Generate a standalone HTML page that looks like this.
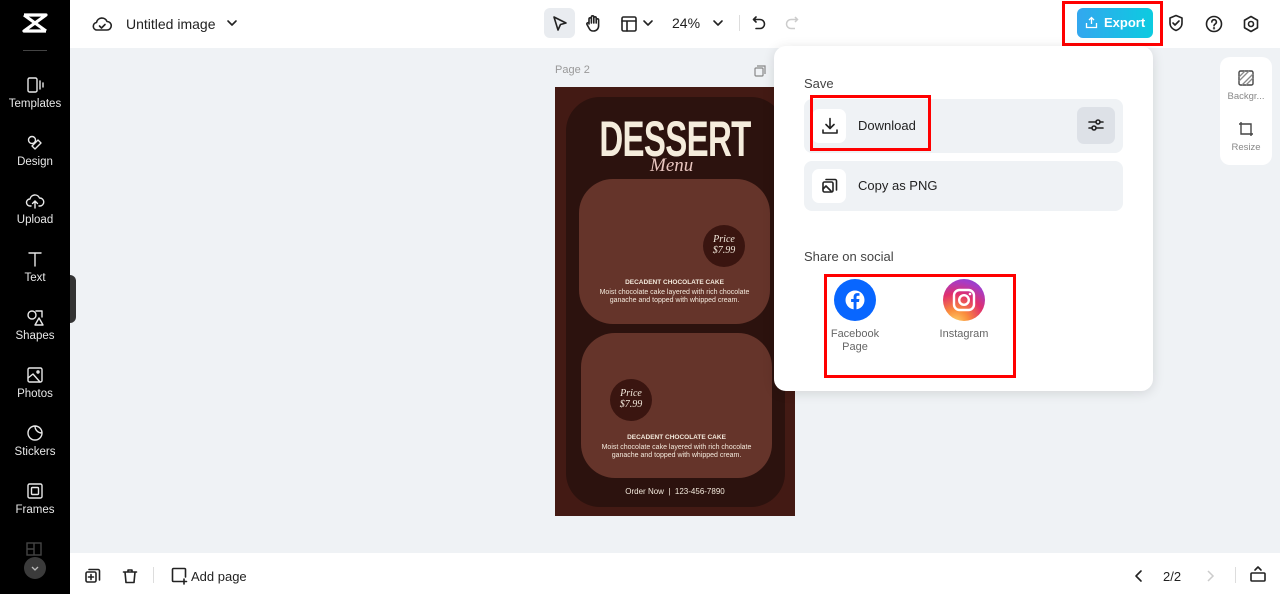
<!DOCTYPE html>
<html><head><meta charset="utf-8"><style>
*{box-sizing:border-box;margin:0;padding:0}
body{width:1280px;height:594px;overflow:hidden;background:#eff2f5;font-family:"Liberation Sans",sans-serif;position:relative;color:#222}
.abs{position:absolute}
#side{left:0;top:0;width:70px;height:594px;background:#000}
.si{position:absolute;left:0;width:70px;text-align:center;color:#e8e8e8;font-size:11.5px}
.si svg{display:block;margin:0 auto 4px}
#top{left:70px;top:0;width:1210px;height:48px;background:#fff}
#bot{left:70px;top:553px;width:1210px;height:41px;background:#fff}
svg{overflow:visible}
.st{fill:none;stroke:#222;stroke-width:1.6;stroke-linecap:round;stroke-linejoin:round}
.sw{fill:none;stroke:#e8e8e8;stroke-width:1.4;stroke-linecap:round;stroke-linejoin:round}
#dd{left:774px;top:46px;width:379px;height:345px;background:#fff;border-radius:12px;box-shadow:0 2px 12px rgba(0,0,0,.12)}
.row{position:absolute;left:30px;width:319px;background:#eff2f5;border-radius:8px}
.ib{position:absolute;left:8px;width:34px;height:34px;background:#fff;border-radius:7px}
.red{position:absolute;border:3px solid #f00}
.poster{left:555px;top:87px;width:240px;height:429px;background:#431a14}
.card{position:absolute;background:#65342a;border-radius:34px;color:#f3e9dc;text-align:center}
.price{position:absolute;width:42px;height:42px;border-radius:50%;background:#3a1510;color:#f3e9dc;font-family:"Liberation Serif",serif;font-style:italic;font-size:10px;line-height:11px;padding-top:9px;text-align:center}
</style></head><body>
<div id="side" class="abs">
<svg class="abs" style="left:22px;top:12px" width="26" height="22" viewBox="0 0 26 22"><path d="M2 3h22L2 19h22" fill="none" stroke="#fff" stroke-width="3.2" stroke-linejoin="round"/><path d="M2 3L24 19" stroke="#fff" stroke-width="3.2"/></svg>
<div class="abs" style="left:23px;top:50px;width:24px;height:1px;background:#444"></div>
<div class="si" style="top:76px"><svg width="18" height="18" class="sw" viewBox="0 0 18 18"><rect x="2" y="2" width="9" height="14" rx="1.5"/><path d="M14 5v8M17 7v4"/></svg>Templates</div>
<div class="si" style="top:134px"><svg width="18" height="18" class="sw" viewBox="0 0 18 18"><circle cx="6" cy="6" r="3.5"/><path d="M9 15l6-6-3-3-6 6z"/></svg>Design</div>
<div class="si" style="top:192px"><svg width="18" height="18" class="sw" viewBox="0 0 18 18"><path d="M5 14H4a3.5 3.5 0 010-7 5 5 0 019.5-1A3.5 3.5 0 0114 14h-1M9 16V9M6.5 11.5L9 9l2.5 2.5"/></svg>Upload</div>
<div class="si" style="top:250px"><svg width="18" height="18" class="sw" viewBox="0 0 18 18"><path d="M3 3h12M9 3v13"/></svg>Text</div>
<div class="si" style="top:308px"><svg width="18" height="18" class="sw" viewBox="0 0 18 18"><circle cx="6" cy="7" r="4"/><path d="M10 3h6v6M9 17l4-7 4 7z"/></svg>Shapes</div>
<div class="si" style="top:366px"><svg width="18" height="18" class="sw" viewBox="0 0 18 18"><rect x="2" y="2" width="14" height="14" rx="1.5"/><circle cx="12" cy="6" r="1"/><path d="M2 12l5-4 7 8"/></svg>Photos</div>
<div class="si" style="top:424px"><svg width="18" height="18" class="sw" viewBox="0 0 18 18"><path d="M16 9a7 7 0 11-7-7c0 4 3 7 7 7zM9 2a7 7 0 017 7"/></svg>Stickers</div>
<div class="si" style="top:482px"><svg width="18" height="18" class="sw" viewBox="0 0 18 18"><rect x="2" y="2" width="14" height="14" rx="1.5"/><rect x="5.5" y="5.5" width="7" height="7" rx="1"/></svg>Frames</div>
<svg class="abs" style="left:26px;top:542px" width="16" height="14" viewBox="0 0 16 14"><rect x="1" y="1" width="14" height="12" fill="none" stroke="#444" stroke-width="1.4"/><path d="M8 1v12M1 7h7" stroke="#444" stroke-width="1.4"/></svg>
<div class="abs" style="left:24px;top:557px;width:22px;height:22px;border-radius:50%;background:#3b3b3b"><svg width="22" height="22" viewBox="0 0 22 22"><path d="M8 10l3 3 3-3" fill="none" stroke="#bbb" stroke-width="1.3"/></svg></div>
</div>
<div class="abs" style="left:70px;top:275px;width:6px;height:48px;background:#333;border-radius:0 6px 6px 0"></div>
<div id="top" class="abs">
<svg class="abs st" style="left:22px;top:15px" width="20" height="18" viewBox="0 0 20 18"><path d="M5 15H4.5a3.8 3.8 0 010-7.5 5.5 5.5 0 0110.5-1A4 4 0 0115 15z"/><path d="M7.5 11l2 2 3.5-3.5"/></svg>
<div class="abs" style="left:56px;top:16px;font-size:14px;color:#222">Untitled image</div>
<svg class="abs st" style="left:157px;top:19px" width="10" height="8"><path d="M1 2l4 4 4-4"/></svg>
<div class="abs" style="left:474px;top:8px;width:31px;height:30px;background:#e9ecf0;border-radius:6px"></div>
<svg class="abs st" style="left:482px;top:15px" width="16" height="16" viewBox="0 0 16 16"><path d="M2 2l12 6-5.5 1.5L6 15z"/></svg>
<svg class="abs st" style="left:515px;top:14px" width="16" height="18" viewBox="0 0 16 18"><path d="M4 10V5a1.2 1.2 0 012.4 0v4V3a1.2 1.2 0 012.4 0v6V4a1.2 1.2 0 012.4 0v5V6a1.2 1.2 0 012.4 0v6a5 5 0 01-5 5H8a4 4 0 01-3.5-2L2 10.5a1.2 1.2 0 012-1.3z"/></svg>
<svg class="abs st" style="left:551px;top:16px" width="16" height="16" viewBox="0 0 16 16"><rect x="1" y="1" width="14" height="14" rx="1.5"/><path d="M1 5h14M6 5v10"/></svg>
<svg class="abs st" style="left:573px;top:19px" width="10" height="8"><path d="M1 2l4 4 4-4"/></svg>
<div class="abs" style="left:602px;top:15px;font-size:14px">24%</div>
<svg class="abs st" style="left:643px;top:19px" width="10" height="8"><path d="M1 2l4 4 4-4"/></svg>
<div class="abs" style="left:669px;top:15px;width:1px;height:16px;background:#ddd"></div>
<svg class="abs st" style="left:682px;top:15px" width="14" height="16" viewBox="0 0 14 16"><path d="M4 2L1.5 4.5 4 7M1.5 4.5H8a4.5 4.5 0 010 9H4"/></svg>
<svg class="abs" style="left:715px;top:15px" width="14" height="16" viewBox="0 0 14 16"><path d="M10 2l2.5 2.5L10 7M12.5 4.5H6a4.5 4.5 0 000 9h4" fill="none" stroke="#ccc" stroke-width="1.5"/></svg>
<div class="abs" style="left:1007px;top:8px;width:76px;height:30px;border-radius:6px;background:linear-gradient(90deg,#33a7ef,#0ccbe0);color:#fff;font-weight:bold;font-size:13px;line-height:30px;padding-left:27px">Export</div>
<svg class="abs" style="left:1015px;top:16px" width="13" height="13" viewBox="0 0 13 13"><path d="M6.5 8V1.5M4 4l2.5-2.5L9 4M1.5 7v4.5h10V7" fill="none" stroke="#fff" stroke-width="1.3"/></svg>
<div class="red" style="left:992px;top:1px;width:101px;height:45px"></div>
<svg class="abs st" style="left:1098px;top:14px" width="16" height="18" viewBox="0 0 16 18"><path d="M8 1.5l6 2.5v5c0 4-3 6.5-6 7.5-3-1-6-3.5-6-7.5V4z"/><path d="M5 9l2 2 4-4"/></svg>
<svg class="abs st" style="left:1135px;top:15px" width="18" height="18" viewBox="0 0 18 18"><circle cx="9" cy="9" r="7.5"/><path d="M6.8 7a2.3 2.3 0 114 1.5c-.8.7-1.8 1-1.8 2.2"/><circle cx="9" cy="13.3" r=".4"/></svg>
<svg class="abs st" style="left:1172px;top:15px" width="18" height="18" viewBox="0 0 18 18"><path d="M9 1.5l6.5 3.75v7.5L9 16.5l-6.5-3.75v-7.5z"/><circle cx="9" cy="9" r="2.5"/></svg>
</div>
<div class="abs" style="left:1220px;top:57px;width:52px;height:108px;background:#fff;border-radius:10px;font-size:9.5px;color:#888;text-align:center">
<svg style="display:block;margin:13px auto 5px" width="16" height="16" viewBox="0 0 16 16"><rect x="1" y="1" width="14" height="14" rx="1.5" fill="none" stroke="#444" stroke-width="1.4"/><path d="M1 11L11 1M4 15L15 4M1 7L7 1M8 15l7-7" stroke="#888" stroke-width="1.3"/></svg>Backgr...
<svg style="display:block;margin:19px auto 5px" width="16" height="16" viewBox="0 0 16 16"><path d="M3 1v12h12M1 3h12v12M3 1v0" fill="none" stroke="#444" stroke-width="1.4"/></svg>Resize</div>
<div class="abs" style="left:555px;top:64px;font-size:11px;color:#999">Page 2</div>
<svg class="abs" style="left:754px;top:65px" width="12" height="12" viewBox="0 0 12 12"><rect x="1" y="3" width="8" height="8" rx="1" fill="none" stroke="#888" stroke-width="1.2"/><path d="M3 1h8v8" fill="none" stroke="#888" stroke-width="1.2"/></svg>
<div class="abs poster">
<div class="abs" style="left:11px;top:10px;width:219px;height:410px;background:#2c120e;border-radius:34px"></div>
<div class="abs" style="left:0;top:22px;width:240px;text-align:center;font-family:'Liberation Sans',sans-serif;font-weight:bold;font-size:50px;color:#f5ecdc;transform:scaleX(.66);letter-spacing:-1px;line-height:60px">DESSERT</div>
<div class="abs" style="left:95px;top:68px;font-family:'Liberation Serif',serif;font-style:italic;font-size:19px;color:#e8c5bf">Menu</div>
<div class="card" style="left:24px;top:92px;width:191px;height:145px"><div class="price" style="left:124px;top:46px">Price<br>$7.99</div><div style="position:absolute;top:100px;width:100%;font-size:6.5px;font-weight:bold">DECADENT CHOCOLATE CAKE</div><div style="position:absolute;top:110px;left:10px;right:10px;font-size:7px;line-height:8px">Moist chocolate cake layered with rich chocolate ganache and topped with whipped cream.</div></div>
<div class="card" style="left:26px;top:246px;width:191px;height:145px"><div class="price" style="left:29px;top:46px">Price<br>$7.99</div><div style="position:absolute;top:101px;width:100%;font-size:6.5px;font-weight:bold">DECADENT CHOCOLATE CAKE</div><div style="position:absolute;top:111px;left:10px;right:10px;font-size:7px;line-height:8px">Moist chocolate cake layered with rich chocolate ganache and topped with whipped cream.</div></div>
<div class="abs" style="left:0;top:400px;width:240px;text-align:center;color:#f3e9dc;font-size:8px">Order Now &nbsp;|&nbsp; 123-456-7890</div>
</div>
<div id="dd" class="abs">
<div class="abs" style="left:30px;top:30px;font-size:13px;color:#444">Save</div>
<div class="row" style="top:53px;height:54px"><div class="ib" style="top:10px"></div>
<svg class="abs st" style="left:17px;top:18px" width="18" height="18" viewBox="0 0 18 18"><path d="M9 1.5V11M5 7.5L9 11.5l4-4M2 13v3h14v-3"/></svg>
<div class="abs" style="left:54px;top:19px;font-size:13px">Download</div>
<div class="abs" style="left:273px;top:8px;width:38px;height:37px;background:#dde1e7;border-radius:7px"><svg class="st" style="position:absolute;left:11px;top:10px" width="16" height="16" viewBox="0 0 16 16"><path d="M1 5h14M1 11h14"/><circle cx="10" cy="5" r="2" fill="#dde1e7"/><circle cx="6" cy="11" r="2" fill="#dde1e7"/></svg></div></div>
<div class="row" style="top:115px;height:50px"><div class="ib" style="top:8px"></div>
<svg class="abs st" style="left:18px;top:17px" width="16" height="16" viewBox="0 0 16 16"><rect x="1" y="4" width="10" height="10" rx="1.5"/><path d="M4 1.5h9a1.5 1.5 0 011.5 1.5v9M1 11l3-3 5 5"/></svg>
<div class="abs" style="left:54px;top:17px;font-size:13px">Copy as PNG</div></div>
<div class="abs" style="left:30px;top:203px;font-size:13px;color:#444">Share on social</div>
<div class="abs" style="left:60px;top:233px;width:42px;height:42px;border-radius:50%;background:#0866ff"><svg width="42" height="42" viewBox="0 0 42 42"><circle cx="21" cy="21" r="9.5" fill="#fff"/><path d="M22.5 31v-8h2.5l.4-3h-2.9v-1.8c0-.9.3-1.4 1.5-1.4h1.5v-2.6c-.3 0-1.2-.1-2.2-.1-2.2 0-3.7 1.3-3.7 3.8V20h-2.5v3h2.5v8z" fill="#0866ff"/></svg></div>
<div class="abs" style="left:48px;top:282px;width:66px;text-align:center;font-size:11px;color:#666;line-height:13px">Facebook<br>Page</div>
<div class="abs" style="left:169px;top:233px;width:42px;height:42px;border-radius:50%;background:radial-gradient(circle at 30% 105%,#fdd36a 0,#fa8d3c 25%,#e1306c 55%,#a53cc8 80%,#6a4bd6 100%)"><svg width="42" height="42" viewBox="0 0 42 42"><rect x="11" y="11" width="20" height="20" rx="5.5" fill="none" stroke="#fff" stroke-width="2.4"/><circle cx="21" cy="21" r="4.8" fill="none" stroke="#fff" stroke-width="2.4"/><circle cx="27" cy="15" r="1.3" fill="#fff"/></svg></div>
<div class="abs" style="left:150px;top:282px;width:80px;text-align:center;font-size:11px;color:#666">Instagram</div>
</div>
<div class="red" style="left:810px;top:95px;width:121px;height:56px"></div>
<div class="red" style="left:824px;top:274px;width:192px;height:104px"></div>
<div id="bot" class="abs">
<svg class="abs st" style="left:15px;top:15px" width="16" height="16" viewBox="0 0 16 16"><rect x="1" y="4" width="10" height="10" rx="1.5"/><path d="M4 1.5h9a1.5 1.5 0 011.5 1.5v9M6 6.5v5M3.5 9h5"/></svg>
<svg class="abs st" style="left:52px;top:15px" width="16" height="16" viewBox="0 0 16 16"><path d="M1.5 4h13M6 4V2h4v2M3 4l1 10.5h8L13 4"/></svg>
<div class="abs" style="left:83px;top:14px;width:1px;height:16px;background:#ddd"></div>
<svg class="abs st" style="left:101px;top:14px" width="17" height="17" viewBox="0 0 17 17"><path d="M10 14.5H2.5a1 1 0 01-1-1v-11a1 1 0 011-1h11a1 1 0 011 1V10M13 12v5M10.5 14.5h5"/></svg>
<div class="abs" style="left:121px;top:16px;font-size:13px">Add page</div>
<svg class="abs st" style="left:1065px;top:17px" width="8" height="12"><path d="M6 1L1 6l5 5"/></svg>
<div class="abs" style="left:1093px;top:16px;font-size:13px">2/2</div>
<svg class="abs" style="left:1136px;top:17px" width="8" height="12"><path d="M2 1l5 5-5 5" fill="none" stroke="#ccc" stroke-width="1.5"/></svg>
<div class="abs" style="left:1165px;top:14px;width:1px;height:16px;background:#ddd"></div>
<svg class="abs st" style="left:1180px;top:13px" width="16" height="16" viewBox="0 0 16 16"><rect x="1" y="7" width="14" height="8" rx="1"/><path d="M5 4l3-3 3 3"/></svg>
</div>
</body></html>
